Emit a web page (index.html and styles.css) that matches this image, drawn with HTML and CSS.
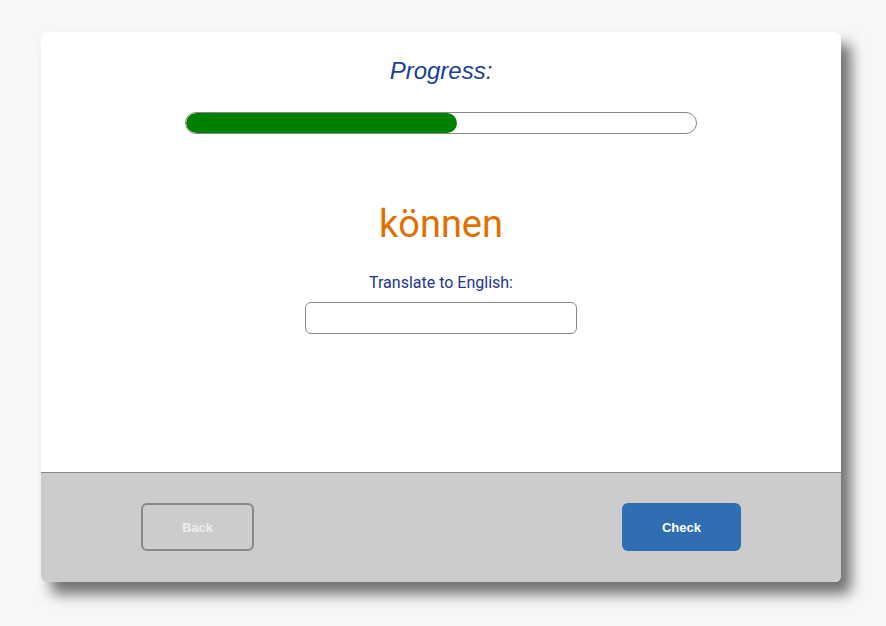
FILE: index.html
```html
<!DOCTYPE html>
<html>
<head>
<meta charset="utf-8">
<link rel="stylesheet" href="styles.css">
</head>
<body>
<div class="card">
  <div class="main">
    <h2 class="title">Progress:</h2>
    <div class="bar"><div class="fill" style="width:271px"></div></div>
    <div class="word">können</div>
    <div class="label">Translate to English:</div>
    <input class="answer" type="text">
  </div>
  <div class="footer">
    <button class="btn back">Back</button>
    <button class="btn check">Check</button>
  </div>
</div>
</body>
</html>
```
FILE: styles.css
```css
html, body {
  margin: 0;
  padding: 0;
  background: #f7f7f7;
}
body {
  min-height: 626px;
  box-sizing: border-box;
  padding: 32px 0 0 41px;
}
.card {
  width: 800px;
  background: #fff;
  border-radius: 6px;
  box-shadow: 10px 12px 14px rgba(0, 0, 0, 0.55);
  overflow: hidden;
}
.main {
  height: 440px;
  box-sizing: border-box;
  padding-top: 25px;
  display: flex;
  flex-direction: column;
  align-items: center;
}
.title {
  margin: 0;
  font-family: "Liberation Sans", Arial, sans-serif;
  font-style: italic;
  font-weight: normal;
  font-size: 24px;
  line-height: 28px;
  color: #1b3f97;
}
.bar {
  margin-top: 27px;
  width: 512px;
  height: 22px;
  box-sizing: border-box;
  border: 1px solid #888;
  border-radius: 11px;
  overflow: hidden;
}
.fill {
  height: 100%;
  background: #008000;
  border-radius: 10px;
}
.word {
  margin-top: 68px;
  font-family: Roboto, sans-serif;
  font-size: 38px;
  color: #e07000;
}
.label {
  margin-top: 27px;
  font-family: Roboto, sans-serif;
  font-size: 16px;
  color: #213690;
}
.answer {
  margin-top: 10px;
  width: 272px;
  height: 32px;
  box-sizing: border-box;
  border: 1px solid #888;
  border-radius: 6px;
  padding: 0 8px;
  font-family: Roboto, sans-serif;
  font-size: 16px;
  outline: none;
}
.footer {
  border-top: 1px solid #888;
  background: #ccc;
  padding: 30px 100px 31px;
  display: flex;
  justify-content: space-between;
}
.btn {
  height: 48px;
  box-sizing: border-box;
  border-radius: 6px;
  font-family: "Liberation Sans", Arial, sans-serif;
  font-weight: bold;
  font-size: 13px;
  cursor: pointer;
}
.back {
  width: 113px;
  background: transparent;
  border: 2px solid #888;
  color: #eee;
}
.check {
  width: 119px;
  background: #2f6eb3;
  border: none;
  color: #fff;
}
```
